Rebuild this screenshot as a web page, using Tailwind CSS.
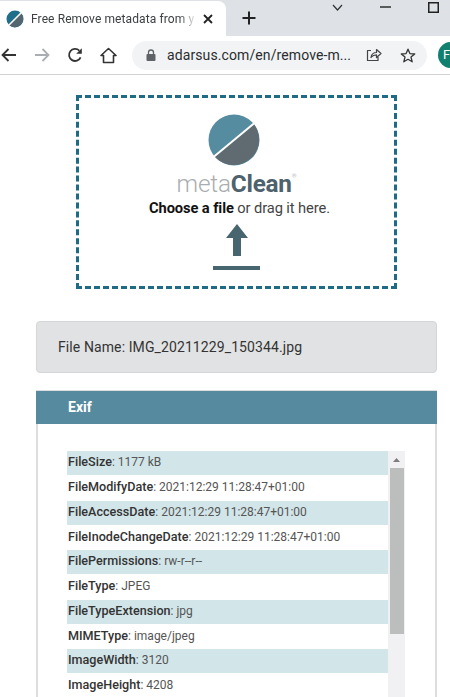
<!DOCTYPE html>
<html><head><meta charset="utf-8">
<script src="https://cdn.jsdelivr.net/npm/@tailwindcss/browser@4"></script>
</head>
<body class="bg-white overflow-hidden w-[450px] h-[697px] font-['Roboto',sans-serif] text-[#333]">
<!-- tab strip -->
<div class="h-[36px] bg-[#dee1e6] flex items-end overflow-hidden">
  <div class="w-[226px] h-[35px] bg-white rounded-tr-[8px] flex items-center pl-[6px] shrink-0">
    <svg width="18" height="18" viewBox="0 0 18 18" class="shrink-0"><circle cx="9" cy="9" r="8.5" fill="#1f6f8b"/><path d="M9 9 L15 3 A8.5 8.5 0 0 1 3 15 Z" fill="#56666e"/><path d="M2.5 15.5 L15.5 2.5" stroke="#fff" stroke-width="1.6"/></svg>
    <span class="ml-[7px] w-[166px] whitespace-nowrap overflow-hidden text-[12px] font-['Roboto'] text-[#3c4043] tracking-[0.1px] [mask-image:linear-gradient(to_right,black_148px,transparent_166px)]">Free Remove metadata from y</span>
    <svg width="10" height="10" viewBox="0 0 10 10" class="ml-[6px]"><path d="M1 1 L9 9 M9 1 L1 9" stroke="#222" stroke-width="1.8"/></svg>
  </div>
  <svg width="14" height="14" viewBox="0 0 14 14" class="ml-[16px] mb-[11px] shrink-0"><path d="M7 0.5 V13.5 M0.5 7 H13.5" stroke="#222" stroke-width="2"/></svg>
  <div class="ml-auto flex items-start h-[36px] pt-[3px]">
    <svg width="11" height="7" viewBox="0 0 11 7" class="mt-[1px]"><path d="M1 1 L5.5 6 L10 1" stroke="#333" stroke-width="1.2" fill="none"/></svg>
    <svg width="11" height="2" viewBox="0 0 11 2" class="ml-[37px] mt-[3px]"><path d="M0 1 H11" stroke="#222" stroke-width="1.4"/></svg>
    <svg width="11" height="11" viewBox="0 0 11 11" class="ml-[37px] -mt-[1px]"><rect x="0.75" y="0.75" width="9.5" height="9.5" fill="none" stroke="#222" stroke-width="1.5"/></svg>
    <div class="w-[11px]"></div>
  </div>
</div>
<!-- toolbar -->
<div class="h-[39px] bg-white border-b border-[#d0d1d4] flex items-center overflow-hidden">
  <svg width="16" height="14" viewBox="0 0 16 14" class="ml-[1px] shrink-0"><path d="M15 7 H1.5 M7.5 1 L1.5 7 L7.5 13" stroke="#333" stroke-width="1.8" fill="none"/></svg>
  <svg width="16" height="14" viewBox="0 0 16 14" class="ml-[17px] shrink-0"><path d="M1 7 H14.5 M8.5 1 L14.5 7 L8.5 13" stroke="#aaaeb3" stroke-width="1.8" fill="none"/></svg>
  <svg width="16" height="16" viewBox="0 0 16 16" class="ml-[17px] shrink-0"><path d="M13.6 10.3 A6 6 0 1 1 12.3 3.7" stroke="#333" stroke-width="1.8" fill="none"/><path d="M14.8 1.2 V6.8 H9.2 Z" fill="#333"/></svg>
  <svg width="17" height="17" viewBox="0 0 17 17" class="ml-[17px] shrink-0"><path d="M8.5 1.5 L16 8.5 H13.5 V15.5 H3.5 V8.5 H1 Z" stroke="#333" stroke-width="1.6" fill="none" stroke-linejoin="round"/></svg>
  <div class="ml-[15px] w-[295px] h-[29px] rounded-full bg-[#f1f3f4] flex items-center shrink-0">
    <svg width="10" height="12" viewBox="0 0 10 12" class="ml-[14px] shrink-0"><rect x="0.5" y="5" width="9" height="7" rx="1" fill="#5f6368"/><path d="M2.5 5 V3.5 A2.5 2.5 0 0 1 7.5 3.5 V5" stroke="#5f6368" stroke-width="1.3" fill="none"/></svg>
    <span class="ml-[11px] text-[14px] font-['Roboto'] text-[#2b2d30] whitespace-nowrap tracking-[0.1px]">adarsus.com/en/remove-m...</span>
    <svg width="16" height="14" viewBox="0 0 16 14" class="ml-[15px] shrink-0"><path d="M5 2.5 H1.5 V12.5 H12 V9 M5 9.5 C5.5 6 8 4.5 10.5 4.5 V1.5 L15 5.5 L10.5 9.5 V6.8 C8.5 6.8 6.5 7.5 5 9.5 Z" stroke="#444" stroke-width="1.2" fill="none" stroke-linejoin="round"/></svg>
    <svg width="16" height="15" viewBox="0 0 16 15" class="ml-[18px] shrink-0"><path d="M8 1.2 L9.9 5.6 L14.7 6 L11 9.1 L12.2 13.8 L8 11.3 L3.8 13.8 L5 9.1 L1.3 6 L6.1 5.6 Z" stroke="#333" stroke-width="1.3" fill="none" stroke-linejoin="round"/></svg>
  </div>
  <div class="ml-[11px] w-[26px] h-[26px] rounded-full bg-[#12806f] text-white text-[13px] flex items-center justify-center shrink-0 pr-[9px]">F</div>
</div>
<!-- content -->
<div class="pt-[20px] pl-[36px] pr-[13px]">
  <div class="ml-[40px] w-[321px] h-[194px] border-[3px] border-dashed border-[#1f6a85] flex flex-col items-center pt-[15px]">
    <svg width="54" height="54" viewBox="0 0 54 54" class="shrink-0 mr-[5px]"><circle cx="27" cy="27" r="25.5" fill="#568ca0"/><path d="M46.6 10.7 A25.5 25.5 0 0 1 7.4 43.3 Z" fill="#5f6b70"/><path d="M6.5 44 L47.5 10" stroke="#fff" stroke-width="2"/></svg>
    <div class="mt-[3px] text-[24.3px] leading-[28px] text-[#a9adb0] font-light font-['Roboto'] tracking-[-0.2px] flex items-start">meta<span class="font-bold text-[#4d626c]">Clean</span><span class="text-[6px] leading-[12px] text-[#999]">®</span></div>
    <div class="ml-[6px] text-[14.7px] leading-[20px] text-[#444] font-['Roboto'] tracking-[-0.1px]"><span class="font-bold text-[#111]">Choose a file</span> or drag it here.</div>
    <svg width="48" height="47" viewBox="0 0 48 47" class="mt-[6px] shrink-0"><path d="M24 0 L35 14 H28 V32 H20 V14 H13 Z" fill="#47666f"/><rect x="0" y="42" width="47" height="4" fill="#47666f"/></svg>
  </div>
  <div class="mt-[32px] w-[401px] h-[52px] rounded-[4px] bg-[#e1e2e4] border border-[#d5d6d8] flex items-center pl-[21px] text-[14px] text-[#333] tracking-[0.1px] font-['Roboto']">File Name: IMG_20211229_150344.jpg</div>
  <div class="mt-[17px] w-[401px] border-t border-[#dcdddf] h-[320px] flex flex-col">
    <div class="h-[33px] bg-[#568b9f] flex items-center pl-[32px] text-white font-bold text-[14px] font-['Roboto'] shrink-0">Exif</div>
    <div class="grow border-x-2 border-[#dcdddf] pt-[27px] pl-[29px] flex">
      <div class="w-[321px] text-[12px] text-[#555] font-['Roboto']">
        <div class="h-[24px] mb-[1px] leading-[22px] bg-[#d2e5e9] whitespace-nowrap pl-px"><b class="text-[12.6px] font-medium text-[#333]">FileSize</b>: 1177 kB</div>
        <div class="h-[24.6px] leading-[22px] whitespace-nowrap pl-px"><b class="text-[12.6px] font-medium text-[#333]">FileModifyDate</b>: 2021:12:29 11:28:47+01:00</div>
        <div class="h-[24px] mb-[1px] leading-[22px] bg-[#d2e5e9] whitespace-nowrap pl-px"><b class="text-[12.6px] font-medium text-[#333]">FileAccessDate</b>: 2021:12:29 11:28:47+01:00</div>
        <div class="h-[24.6px] leading-[22px] whitespace-nowrap pl-px"><b class="text-[12.6px] font-medium text-[#333]">FileInodeChangeDate</b>: 2021:12:29 11:28:47+01:00</div>
        <div class="h-[24px] mb-[1px] leading-[22px] bg-[#d2e5e9] whitespace-nowrap pl-px"><b class="text-[12.6px] font-medium text-[#333]">FilePermissions</b>: rw-r--r--</div>
        <div class="h-[24.6px] leading-[22px] whitespace-nowrap pl-px"><b class="text-[12.6px] font-medium text-[#333]">FileType</b>: JPEG</div>
        <div class="h-[24px] mb-[1px] leading-[22px] bg-[#d2e5e9] whitespace-nowrap pl-px"><b class="text-[12.6px] font-medium text-[#333]">FileTypeExtension</b>: jpg</div>
        <div class="h-[24.6px] leading-[22px] whitespace-nowrap pl-px"><b class="text-[12.6px] font-medium text-[#333]">MIMEType</b>: image/jpeg</div>
        <div class="h-[24px] mb-[1px] leading-[22px] bg-[#d2e5e9] whitespace-nowrap pl-px"><b class="text-[12.6px] font-medium text-[#333]">ImageWidth</b>: 3120</div>
        <div class="h-[24.6px] leading-[22px] whitespace-nowrap pl-px"><b class="text-[12.6px] font-medium text-[#333]">ImageHeight</b>: 4208</div>
      </div>
      <div class="w-[17px] h-[260px] bg-[#f1f1f3] flex flex-col items-center shrink-0">
        <svg width="9" height="6" viewBox="0 0 9 6" class="mt-[6px] shrink-0"><path d="M4.5 1 L8 5 H1 Z" fill="#7d7d7d"/></svg>
        <div class="mt-[5px] w-[14px] h-[166px] bg-[#bcbdbd]"></div>
      </div>
    </div>
  </div>
</div>
</body></html>
